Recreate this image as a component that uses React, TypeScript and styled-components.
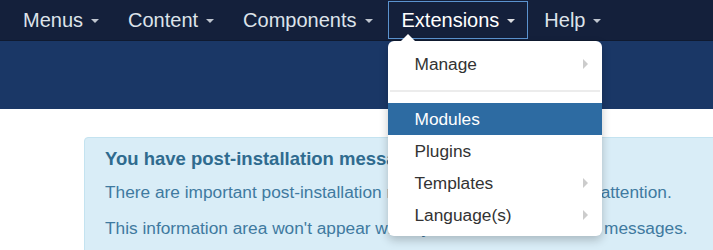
import React from "react";
import styled, { createGlobalStyle } from "styled-components";

const GlobalStyle = createGlobalStyle`
  html, body {
    margin: 0;
    padding: 0;
    background: #ffffff;
    overflow: hidden;
    font-family: "Liberation Sans", Arial, sans-serif;
  }
  * { box-sizing: border-box; }
`;

const Page = styled.div`
  width: 713px;
  height: 250px;
  overflow: hidden;
  position: relative;
`;

const NavBar = styled.nav`
  height: 41px;
  background: #14203b;
  border-bottom: 1px solid #0f1a30;
  display: flex;
  align-items: flex-start;
  gap: 2px;
  padding-left: 9px;
`;

const NavItem = styled.div<{ $active?: boolean }>`
  position: relative;
  display: flex;
  align-items: center;
  padding: 0 12px 0 13px;
  margin-top: 1px;
  height: 38px;
  font-size: 20px;
  color: ${(p) => (p.$active ? "#ffffff" : "#dde3ea")};
  border: 1px solid ${(p) => (p.$active ? "#5b93cf" : "transparent")};
`;

const Caret = styled.span`
  display: inline-block;
  width: 0;
  height: 0;
  margin-left: 8px;
  margin-top: 2px;
  border-left: 4.5px solid transparent;
  border-right: 4.5px solid transparent;
  border-top: 4.5px solid currentColor;
  opacity: 0.85;
`;

const Band = styled.div`
  height: 68px;
  background: #1a3766;
`;

const Content = styled.div`
  padding: 28px 0 0 84px;
`;

const Alert = styled.div`
  width: 700px;
  height: 140px;
  background: #d9edf7;
  border: 1px solid #c4e3f0;
  border-radius: 4px;
  padding: 10px 20px;
  color: #3f7aa0;
`;

const AlertTitle = styled.h4`
  margin: 0 0 11px;
  font-size: 18.5px;
  font-weight: bold;
  color: #2f6b8f;
  line-height: 22px;
`;

const AlertText = styled.p`
  margin: 0 0 14px;
  font-size: 17.3px;
  line-height: 22px;
  white-space: nowrap;
`;

const Dropdown = styled.div`
  position: absolute;
  top: 39px;
  left: -1px;
  width: 214px;
  background: #ffffff;
  border-radius: 6px;
  box-shadow: 0 4px 10px rgba(0, 0, 0, 0.22);
  padding: 7px 0 5px;
  z-index: 10;

  &::before {
    content: "";
    position: absolute;
    top: -7px;
    left: 13px;
    border-left: 7px solid transparent;
    border-right: 7px solid transparent;
    border-bottom: 7px solid #ffffff;
  }
`;

const MenuItem = styled.div<{ $active?: boolean }>`
  height: 32px;
  display: flex;
  align-items: center;
  justify-content: space-between;
  padding: 0 14px 0 27px;
  font-size: 17.3px;
  color: ${(p) => (p.$active ? "#ffffff" : "#333333")};
  background: ${(p) => (p.$active ? "#2d6ba2" : "transparent")};
`;

const SubArrow = styled.span`
  width: 0;
  height: 0;
  border-top: 5px solid transparent;
  border-bottom: 5px solid transparent;
  border-left: 5px solid #cccccc;
`;

const Divider = styled.div`
  height: 2px;
  margin: 10px 2px 11px;
  background: #ececec;
`;

const navItems = ["Menus", "Content", "Components", "Extensions", "Help"];

export default function App() {
  return (
    <>
      <GlobalStyle />
      <Page>
        <NavBar>
          {navItems.map((label) => (
            <NavItem key={label} $active={label === "Extensions"}>
              {label}
              <Caret />
              {label === "Extensions" && (
                <Dropdown>
                  <MenuItem>
                    Manage
                    <SubArrow />
                  </MenuItem>
                  <Divider />
                  <MenuItem $active>Modules</MenuItem>
                  <MenuItem>Plugins</MenuItem>
                  <MenuItem>
                    Templates
                    <SubArrow />
                  </MenuItem>
                  <MenuItem>
                    Language(s)
                    <SubArrow />
                  </MenuItem>
                </Dropdown>
              )}
            </NavItem>
          ))}
        </NavBar>
        <Band />
        <Content>
          <Alert>
            <AlertTitle>You have post-installation messages</AlertTitle>
            <AlertText>
              There are important post-installation messages that require your attention.
            </AlertText>
            <AlertText>
              This information area won't appear when you have hidden all the messages.
            </AlertText>
          </Alert>
        </Content>
      </Page>
    </>
  );
}
